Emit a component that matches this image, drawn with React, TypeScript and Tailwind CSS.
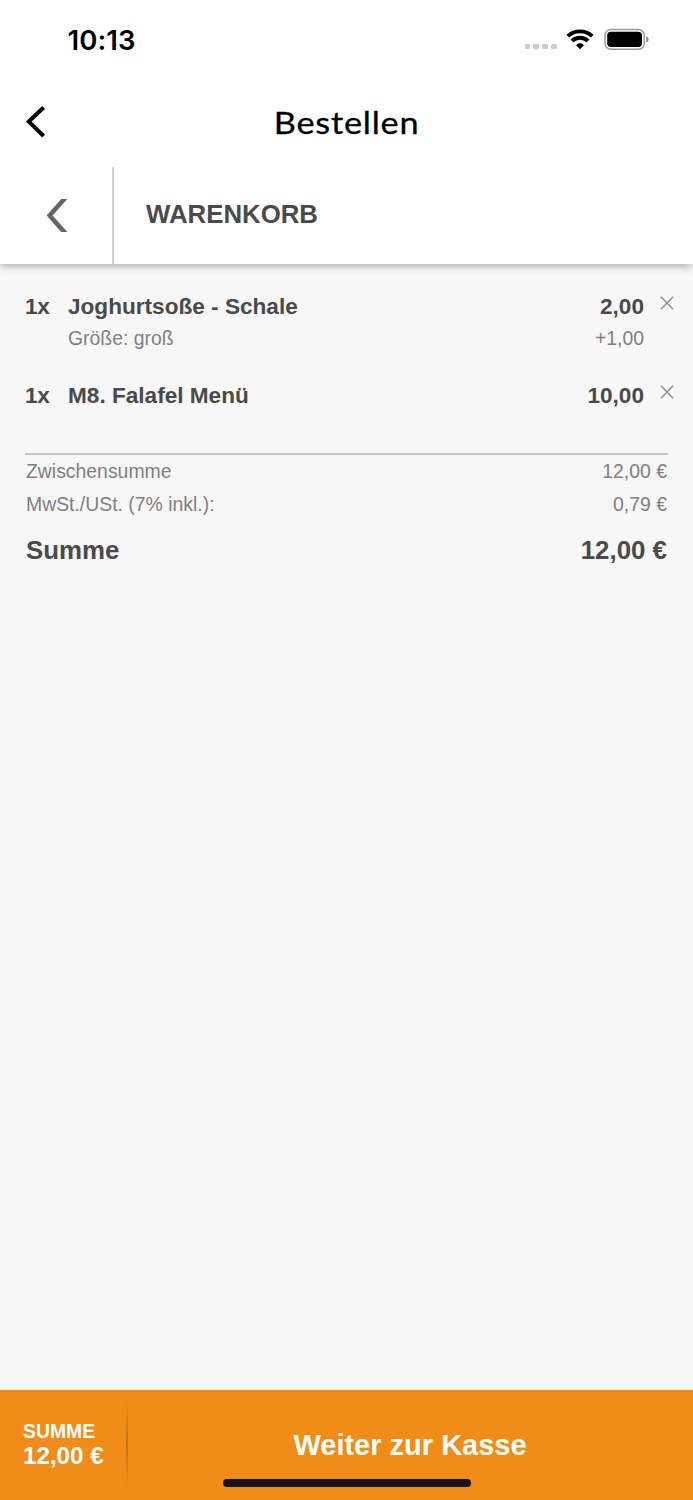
import React from "react";

type Item = {
  name: string;
  price: string;
  option?: { label: string; price: string };
};

const items: Item[] = [
  { name: "Joghurtsoße - Schale", price: "2,00", option: { label: "Größe: groß", price: "+1,00" } },
  { name: "M8. Falafel Menü", price: "10,00" },
];

function StatusBar() {
  return (
    <div className="flex h-[78px] items-start justify-between pl-[67.5px] pr-[43px] text-black">
      <span className="mt-[23px] font-['Inter',sans-serif] text-[27.5px] font-semibold leading-[34px] tracking-[0.1px]">
        10:13
      </span>
      <div className="mt-[28px] flex items-start">
        <div className="mt-[15.5px] flex gap-[3px]">
          {[0, 1, 2, 3].map((i) => (
            <span key={i} className="h-[5.5px] w-[5.7px] rounded-[1.5px] bg-[#cbcbcb]" />
          ))}
        </div>
        <svg className="ml-[9.2px] mt-[1px]" width="28" height="21" viewBox="0 0 28 21" fill="none">
          <path d="M1.8 7.2C8.5 0.7 19.5 0.7 26.2 7.2" stroke="#000" strokeWidth="3.9" />
          <path d="M6.1 11.9C10.5 7.7 17.5 7.7 21.9 11.9" stroke="#000" strokeWidth="3.9" />
          <path d="M14 20.2L10.1 16.2C12.2 13.7 15.8 13.7 17.9 16.2Z" fill="#000" />
        </svg>
        <svg className="ml-[10.3px]" width="46" height="23" viewBox="0 0 46 23" fill="none">
          <rect x="1" y="1.6" width="39.3" height="19.6" rx="5.8" stroke="#9a9a9a" strokeWidth="1.5" />
          <rect x="3.2" y="3.8" width="34.8" height="15.2" rx="3.8" fill="#000" />
          <path d="M42.2 8.3C45.5 9.3 45.5 13.5 42.2 14.5Z" fill="#8e8e8e" />
        </svg>
      </div>
    </div>
  );
}

function TitleBar() {
  return (
    <div className="grid h-[89px] grid-cols-[72px_1fr_72px] items-center">
      <svg className="mb-[2px] ml-[25px]" width="22" height="34" viewBox="0 0 22 34" fill="none">
        <path d="M18.6 2.5L3.8 16.6L18.6 31" stroke="#000" strokeWidth="4" />
      </svg>
      <h1 className="mb-[2px] scale-x-[1.09] text-center font-['Lato',sans-serif] text-[31.5px] leading-[40px] tracking-[0.7px] text-black [-webkit-text-stroke:0.3px_black]">
        Bestellen
      </h1>
    </div>
  );
}

function CartHeader() {
  return (
    <div className="flex h-[97px]">
      <div className="flex w-[114px] justify-center border-r-2 border-[#d0d0d0] pl-[1px] pt-[32px]">
        <svg width="22" height="33" viewBox="0 0 22 33">
          <path d="M15.2 0H21.4L6.6 16.5L21.4 33H15.2L0.6 16.5Z" fill="#666" />
        </svg>
      </div>
      <h2 className="pl-[32px] pt-[31px] text-[25.8px] font-bold leading-[32px]">WARENKORB</h2>
    </div>
  );
}

function RemoveIcon() {
  return (
    <svg className="ml-[16px] mt-[5px]" width="14" height="14" viewBox="0 0 14 14">
      <path d="M0.8 0.8L13.2 13.2M13.2 0.8L0.8 13.2" stroke="#8f8f8f" strokeWidth="1.5" />
    </svg>
  );
}

function CartItem({ item }: { item: Item }) {
  return (
    <li className="flex items-start">
      <span className="w-[43px] text-[22.6px] font-bold leading-[32px] tracking-[-0.3px]">1x</span>
      <div className="flex-1">
        <div className="flex justify-between text-[22.6px] font-bold leading-[32px]">
          <span>{item.name}</span>
          <span>{item.price}</span>
        </div>
        {item.option && (
          <div className="flex justify-between pb-[1px] text-[19.4px] leading-[31px] text-[#808080]">
            <span>{item.option.label}</span>
            <span>{item.option.price}</span>
          </div>
        )}
      </div>
      <RemoveIcon />
    </li>
  );
}

export default function App() {
  return (
    <div className="flex h-[1500px] w-[693px] flex-col overflow-hidden bg-[#f7f7f7] font-['Liberation_Sans',Arial,sans-serif] text-[#4a4a4a]">
      <header className="bg-white shadow-[0_3px_8px_-1px_rgba(0,0,0,0.32)]">
        <StatusBar />
        <TitleBar />
        <CartHeader />
      </header>

      <main className="flex-1 px-[25px] pt-[27px]">
        <ul className="-mr-[6px] flex flex-col gap-[25px] pb-[41px]">
          {items.map((item) => (
            <CartItem key={item.name} item={item} />
          ))}
        </ul>
        <div className="border-t-2 border-[#c6c6c6] px-[1px] text-[19.4px] leading-[32px] text-[#808080]">
          <div className="flex justify-between">
            <span>Zwischensumme</span>
            <span>12,00 €</span>
          </div>
          <div className="mt-[1px] flex justify-between">
            <span>MwSt./USt. (7% inkl.):</span>
            <span>0,79 €</span>
          </div>
          <div className="mt-[14px] flex justify-between text-[25.87px] font-bold text-[#4a4a4a]">
            <span>Summe</span>
            <span>12,00 €</span>
          </div>
        </div>
      </main>

      <footer className="relative flex h-[110.5px] bg-[#f08c18] font-bold text-white">
        <div className="w-[126px] pl-[23px] pt-[29px]">
          <div className="text-[19.4px] leading-[24px]">SUMME</div>
          <div className="text-[24.2px] leading-[25px]">12,00 €</div>
        </div>
        <div className="mt-[12px] h-[84px] w-[2px] bg-linear-to-b from-transparent via-[#c37215] to-transparent" />
        <button className="flex-1 pb-[37px] pr-[1px] pt-[37.5px] text-[29px] leading-[36px]">Weiter zur Kasse</button>
        <div className="absolute bottom-[13px] left-[223px] h-[8.5px] w-[248px] rounded-full bg-[#151515]" />
      </footer>
    </div>
  );
}
